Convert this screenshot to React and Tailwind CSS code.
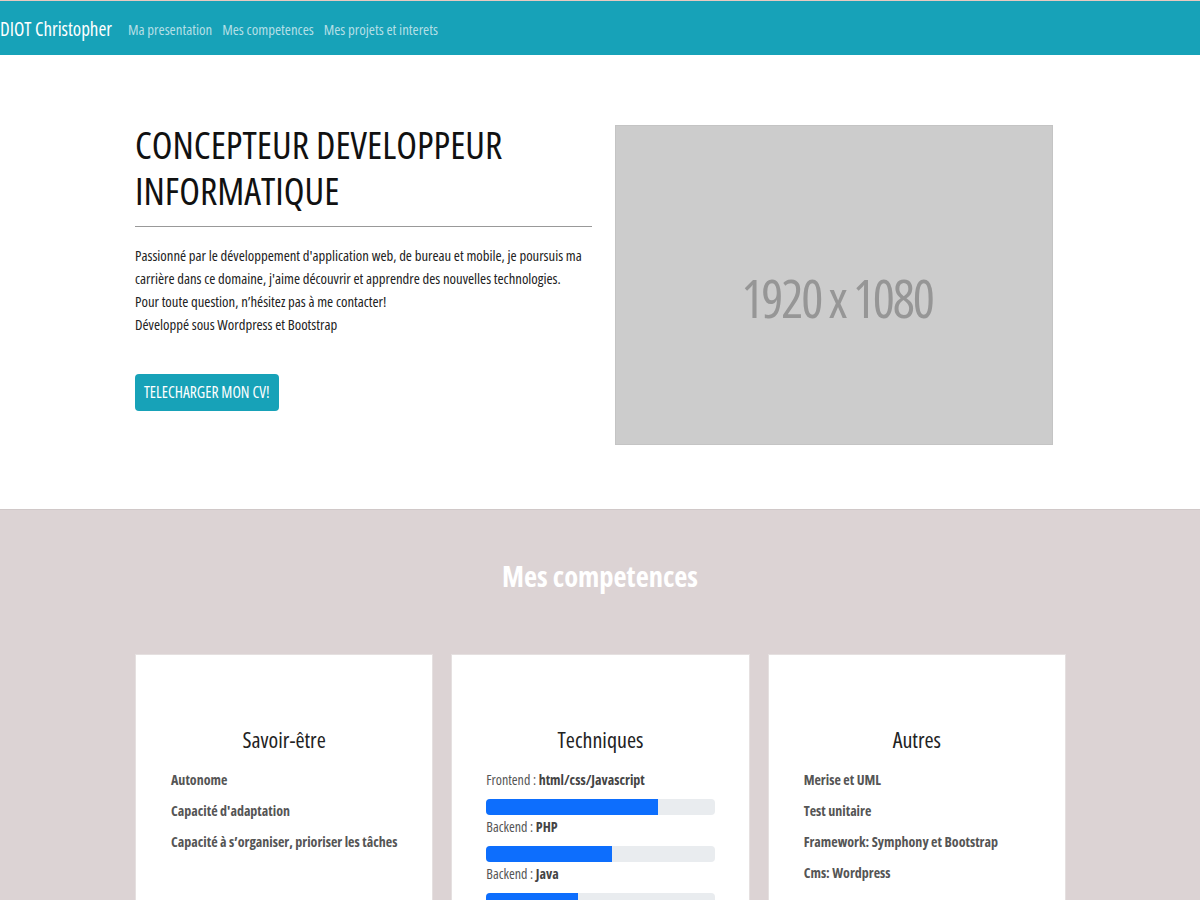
import React from "react";

const font = { fontFamily: '"Open Sans", "Noto Sans", sans-serif' };

function Bar({ label, value, pct }) {
  return (
    <div>
      <p className="text-[14px] text-[#555] leading-[20px]">
        {label} : <b className="font-bold text-[#444]">{value}</b>
      </p>
      <div className="mt-[9px] mb-[2px] h-[16px] rounded-[4px] bg-[#e9ecef] overflow-hidden">
        <div className="h-full bg-[#0d6efd]" style={{ width: pct + "%" }} />
      </div>
    </div>
  );
}

function Card({ title, children }) {
  return (
    <div className="bg-white border border-[#e5e0e0] h-[260px] pt-[69px] pl-[35px] pr-[20px]">
      <h3 className="text-center text-[22px] text-[#222] leading-[30px] mb-[10px] pr-[15px]">{title}</h3>
      {children}
    </div>
  );
}

export default function App() {
  return (
    <div className="min-h-screen bg-white font-stretch-condensed" style={font}>
      {/* Navbar */}
      <nav className="h-[55px] bg-[#17a2b8] border-t border-[#e8c9c0] flex items-center pt-[3px]">
        <span className="text-white text-[19px] mr-[16px]">DIOT Christopher</span>
        <div className="flex gap-[10px] text-[14.8px] text-[#b4dfe6]">
          <span>Ma presentation</span>
          <span>Mes competences</span>
          <span>Mes projets et interets</span>
        </div>
      </nav>

      {/* Hero */}
      <section className="h-[454px] flex items-start pl-[135px] pt-[66px]">
        <div className="w-[457px]">
          <h1 className="text-[38px] leading-[46px] text-[#111] uppercase">
            Concepteur developpeur informatique
          </h1>
          <hr className="mt-[13px] border-t border-[#999]" />
          <p className="mt-[17px] text-[14.7px] leading-[23px] text-[#222]">
            Passionné par le développement d'application web, de bureau et mobile, je poursuis ma carrière dans ce domaine, j'aime découvrir et apprendre des nouvelles technologies.
            <br />
            Pour toute question, n’hésitez pas à me contacter!
            <br />
            Développé sous Wordpress et Bootstrap
          </p>
          <button className="mt-[38px] h-[37px] px-[9px] rounded-[4px] bg-[#17a2b8] text-white text-[15.5px]">
            TELECHARGER MON CV!
          </button>
        </div>
        <div className="mt-[4px] ml-[23px] w-[438px] h-[320px] bg-[#cccccc] border border-[#c4c4c4] flex items-center justify-center pt-[26px] pl-[6px]">
          <span className="text-[52px] leading-none text-[#969696] tracking-[-2.2px]">
            1920 x 1080
          </span>
        </div>
      </section>

      {/* Competences */}
      <section className="bg-[#dcd3d4] border-t border-[#d0c8c8] pt-[48px] pb-[40px]">
        <h2 className="text-center text-white font-bold text-[28.5px] leading-[36px]">Mes competences</h2>
        <div className="mt-[60px] mx-[135px] grid grid-cols-3 gap-[18px] w-[931px]">
          <Card title="Savoir-être">
            <ul className="text-[14px] font-bold text-[#555] leading-[31px]">
              <li>Autonome</li>
              <li>Capacité d'adaptation</li>
              <li>Capacité à s’organiser, prioriser les tâches</li>
            </ul>
          </Card>
          <Card title="Techniques">
            <div className="-ml-[1px] mr-[14px] mt-[16px]">
              <Bar label="Frontend" value="html/css/Javascript" pct={75} />
              <Bar label="Backend" value="PHP" pct={55} />
              <Bar label="Backend" value="Java" pct={40} />
            </div>
          </Card>
          <Card title="Autres">
            <ul className="text-[14px] font-bold text-[#555] leading-[31px]">
              <li>Merise et UML</li>
              <li>Test unitaire</li>
              <li>Framework: Symphony et Bootstrap</li>
              <li>Cms: Wordpress</li>
            </ul>
          </Card>
        </div>
      </section>
    </div>
  );
}
